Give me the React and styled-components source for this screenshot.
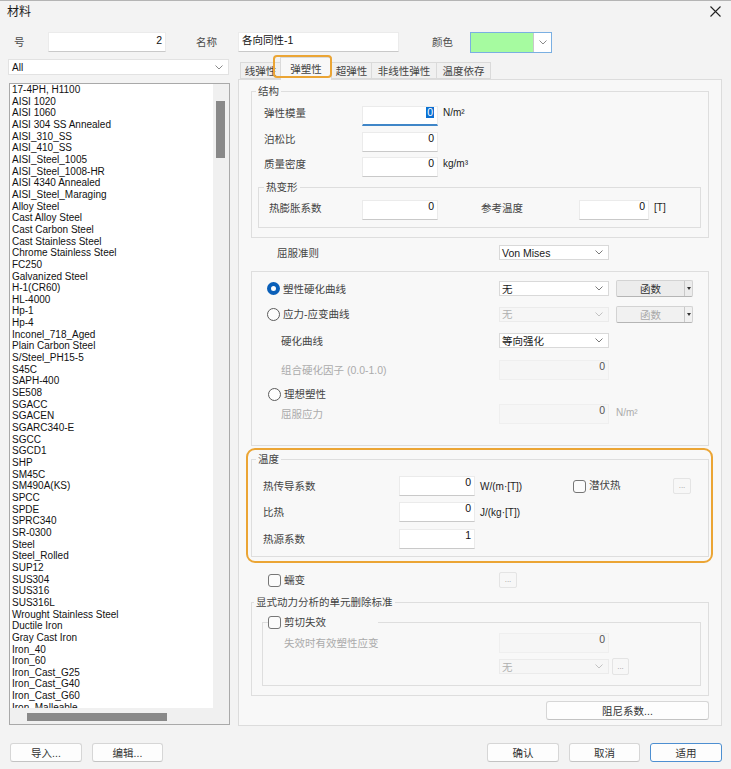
import React from 'react';
import styled, { createGlobalStyle, css } from 'styled-components';

const GlobalStyle = createGlobalStyle`
  html, body { margin: 0; padding: 0; background: #f3f3f3; }
  body { font-family: "Liberation Sans", "Noto Sans CJK SC", sans-serif; }
  *, *::before, *::after { box-sizing: border-box; }
  button { font-family: inherit; }
`;

const materials = [
  '17-4PH, H1100', 'AISI 1020', 'AISI 1060', 'AISI 304 SS Annealed', 'AISI_310_SS', 'AISI_410_SS',
  'AISI_Steel_1005', 'AISI_Steel_1008-HR', 'AISI 4340 Annealed', 'AISI_Steel_Maraging', 'Alloy Steel',
  'Cast Alloy Steel', 'Cast Carbon Steel', 'Cast Stainless Steel', 'Chrome Stainless Steel', 'FC250',
  'Galvanized Steel', 'H-1(CR60)', 'HL-4000', 'Hp-1', 'Hp-4', 'Inconel_718_Aged', 'Plain Carbon Steel',
  'S/Steel_PH15-5', 'S45C', 'SAPH-400', 'SE508', 'SGACC', 'SGACEN', 'SGARC340-E', 'SGCC', 'SGCD1', 'SHP',
  'SM45C', 'SM490A(KS)', 'SPCC', 'SPDE', 'SPRC340', 'SR-0300', 'Steel', 'Steel_Rolled', 'SUP12', 'SUS304',
  'SUS316', 'SUS316L', 'Wrought Stainless Steel', 'Ductile Iron', 'Gray Cast Iron', 'Iron_40', 'Iron_60',
  'Iron_Cast_G25', 'Iron_Cast_G40', 'Iron_Cast_G60', 'Iron_Malleable',
];

// vertical nudge inside a centred flex row
const nudge = (dy = 0) => (dy < 0 ? `margin-bottom: ${-2 * dy}px;` : `margin-top: ${2 * dy}px;`);

const Window = styled.div`
  width: 731px;
  height: 769px;
  display: flex;
  flex-direction: column;
  overflow: hidden;
  background: #f3f3f3;
  border-top: 1px solid #b4b4b4;
  color: #444;
`;

const TitleBar = styled.div`
  height: 21px;
  display: flex;
  align-items: flex-start;
  justify-content: space-between;
  padding: 2px 10px 0 7px;
`;

const Title = styled.span`
  font-family: "Noto Sans CJK SC", sans-serif;
  font-size: 12px;
  line-height: 15px;
  color: #1b1b1b;
`;

const Body = styled.div`
  flex: 1;
  display: flex;
  flex-direction: column;
  padding: 10px 9px 0 8px;
`;

const TopRow = styled.div`
  height: 21px;
  display: flex;
  align-items: flex-start;
`;

const TopLabel = styled.span`
  width: ${p => p.$w}px;
  margin-left: ${p => p.$ml}px;
  padding-top: 4px;
  font-size: 10.5px;
  line-height: 12px;
  color: #4a4a4a;
`;

const Field = styled.div`
  flex: none;
  width: ${p => p.$w}px;
  height: ${p => p.$h || 20}px;
  margin-left: ${p => p.$ml || 0}px;
  display: flex;
  justify-content: ${p => (p.$left ? 'flex-start' : 'flex-end')};
  align-items: flex-start;
  padding: ${p => p.$pt || 0}px 3px 0;
  background: ${p => (p.$disabled ? '#f6f6f6' : '#ffffff')};
  border: 1px solid ${p => (p.$disabled ? '#efefef' : '#ebebeb')};
  border-bottom: ${p =>
    p.$focus ? '2px solid #3f86c8' : p.$disabled ? '1px solid #efefef' : '1px solid #c9c9c9'};
  font-size: 10.5px;
  line-height: 11px;
  color: ${p => (p.$disabled ? '#555' : '#111')};
  white-space: nowrap;
`;

const Selected = styled.span`
  background: #0a6fd1;
  color: #fff;
  padding: 0 1px;
`;

const ColorPicker = styled.div`
  display: flex;
  width: 82px;
  height: 21px;
  border: 1px solid #7aafe2;
  background: #fff;
`;

const Swatch = styled.div`
  flex: 1;
  background: #a6fba0;
  border-right: 1px solid #c8c8c8;
`;

const PickerArrow = styled.div`
  width: 17px;
  display: flex;
  align-items: center;
  justify-content: center;
`;

const Main = styled.div`
  display: grid;
  grid-template-columns: 222px 484px;
  column-gap: 8px;
  height: 671px;
  margin-top: 3px;
`;

const LeftCol = styled.div`
  display: flex;
  flex-direction: column;
`;

const FilterSelect = styled.div`
  width: 221px;
  height: 16px;
  margin-top: 3px;
  display: flex;
  align-items: center;
  justify-content: space-between;
  padding: 0 5px 0 3px;
  background: #fff;
  border: 1px solid #e2e2e2;
  font-size: 10px;
  color: #111;
`;

const ListBox = styled.div`
  width: 221px;
  height: 642px;
  margin: 8px 0 0 1px;
  display: grid;
  grid-template-columns: 1fr 16px;
  grid-template-rows: 1fr 16px;
  border: 1px solid #a9a9a9;
  background: #fff;
`;

const ListItems = styled.div`
  overflow: hidden;
  padding-left: 2px;
`;

const Item = styled.div`
  height: 11.67px;
  line-height: 11.67px;
  font-size: 10px;
  color: #111;
  white-space: nowrap;
`;

const Track = styled.div`
  background: #f0f0f0;
  padding: ${p => p.$pad};
`;

const Thumb = styled.div`
  width: ${p => p.$w}px;
  height: ${p => p.$h}px;
  background: #898989;
`;

const RightCol = styled.div`
  display: flex;
  flex-direction: column;
`;

const TabStrip = styled.div`
  height: 23px;
  display: flex;
  align-items: flex-end;
  padding-left: 2px;
`;

const Tab = styled.div`
  position: relative;
  width: ${p => p.$w}px;
  height: ${p => (p.$active ? 23 : 17)}px;
  margin-right: -1px;
  margin-bottom: ${p => (p.$active ? -1 : 0)}px;
  z-index: ${p => (p.$active ? 2 : 1)};
  display: flex;
  align-items: center;
  justify-content: center;
  padding-bottom: ${p => (p.$active ? 2 : 0)}px;
  background: ${p => (p.$active ? '#f8f8f8' : '#f0f0f0')};
  border: 1px solid #dadada;
  border-bottom: ${p => (p.$active ? 'none' : '1px solid #dadada')};
  font-size: 10.5px;
  color: #444;
  white-space: nowrap;
  ${p => p.$active && css`
    &::after {
      content: '';
      position: absolute;
      left: -8px;
      right: -1px;
      top: -3px;
      bottom: 2px;
      border: 2px solid #eba535;
      border-radius: 4px;
    }
  `}
`;

const Panel = styled.div`
  height: 647px;
  display: flex;
  flex-direction: column;
  padding: 0 12px;
  background: #f8f8f8;
  border: 1px solid #dcdcdc;
`;

const Group = styled.fieldset`
  min-width: 0;
  margin: ${p => p.$mt || 0}px 0 0;
  padding: ${p => p.$pad};
  border: 1px solid #dedede;
`;

// legend offsets are measured from the fieldset's padding edge
const Legend = styled.legend`
  margin-left: ${p => p.$ml}px;
  padding: 0 2px;
  font-size: 10.5px;
  line-height: 12px;
  color: #444;
`;

const CheckLegend = styled.legend`
  width: 110px;
  height: 14px;
  margin-left: ${p => p.$ml}px;
  padding: 0;
  display: flex;
  align-items: center;
  gap: 3px;
`;

const Box = styled.div`
  margin-top: ${p => p.$mt}px;
  padding: ${p => p.$pad};
  border: 1px solid #dedede;
`;

const Highlight = styled.div`
  margin: 2px -4px 0 -5px;
  padding: 3px 2px 4px 3px;
  border: 2px solid #eba535;
  border-radius: 9px;
`;

const Row = styled.div`
  display: flex;
  align-items: center;
  height: ${p => p.$h || 20}px;
  margin-top: ${p => p.$mt || 0}px;
  padding-left: ${p => p.$pl || 0}px;
`;

const Label = styled.span`
  flex: none;
  width: ${p => (p.$w ? `${p.$w}px` : 'auto')};
  margin-left: ${p => p.$ml || 0}px;
  ${p => nudge(p.$dy)}
  font-size: 10.5px;
  line-height: 12px;
  color: ${p => (p.$muted ? '#ababab' : '#444')};
  white-space: nowrap;
`;

const Unit = styled.span`
  flex: none;
  width: ${p => (p.$w ? `${p.$w}px` : 'auto')};
  margin-left: ${p => p.$ml || 5}px;
  ${p => nudge(p.$dy)}
  font-size: 10px;
  line-height: 12px;
  color: ${p => (p.$muted ? '#ababab' : '#222')};
  white-space: nowrap;
`;

const Choice = styled.div`
  flex: none;
  width: ${p => (p.$w ? `${p.$w}px` : 'auto')};
  display: flex;
  align-items: center;
  gap: 3px;
`;

const Radio = styled.span`
  flex: none;
  width: 13px;
  height: 13px;
  border-radius: 50%;
  background: #fdfdfd;
  border: ${p => (p.$checked ? '4px solid #0a5fb8' : '1px solid #5c5c5c')};
`;

const Check = styled.span`
  flex: none;
  width: 13px;
  height: 13px;
  border-radius: 3px;
  background: #fbfbfb;
  border: 1px solid #767676;
`;

const SelectBox = styled.div`
  flex: none;
  width: ${p => p.$w}px;
  height: 15px;
  display: flex;
  align-items: center;
  justify-content: space-between;
  padding: 0 5px 0 2px;
  background: ${p => (p.$disabled ? '#f6f6f6' : '#fff')};
  border: 1px solid ${p => (p.$disabled ? '#ebebeb' : '#d9d9d9')};
  font-size: 10.5px;
  line-height: 12px;
  color: ${p => (p.$disabled ? '#b0b0b0' : '#1a1a1a')};
  white-space: nowrap;
`;

const FuncBtn = styled.div`
  flex: none;
  width: 77px;
  height: 17px;
  margin-left: 7px;
  display: flex;
  background: ${p => (p.$disabled ? '#f1f1f1' : '#ececec')};
  border: 1px solid #d3d3d3;
  border-bottom-color: #b5b5b5;
  border-radius: 2px;
  font-size: 10.5px;
  color: ${p => (p.$disabled ? '#a9a9a9' : '#333')};
`;

const FuncMain = styled.span`
  flex: 1;
  display: flex;
  align-items: center;
  justify-content: center;
  border-right: 1px solid #c9c9c9;
`;

const FuncArrow = styled.span`
  width: 7px;
  display: flex;
  align-items: center;
  justify-content: center;
`;

const Dots = styled.button`
  flex: none;
  width: ${p => p.$w || 18}px;
  height: ${p => p.$h || 16}px;
  margin-left: ${p => p.$ml || 0}px;
  padding: 0 0 3px;
  display: flex;
  align-items: flex-end;
  justify-content: center;
  background: #f7f7f7;
  border: 1px solid #e4e4e4;
  border-radius: 2px;
  font-size: 8px;
  line-height: 8px;
  color: #9a9a9a;
`;

const Btn = styled.button`
  flex: none;
  width: ${p => p.$w}px;
  height: 19px;
  margin-top: ${p => p.$mt || 0}px;
  align-self: ${p => p.$self || 'auto'};
  padding: 0;
  background: #fdfdfd;
  border: 1px solid ${p => (p.$primary ? '#4d8fd1' : '#d6d6d6')};
  border-bottom-color: ${p => (p.$primary ? '#4d8fd1' : '#c3c3c3')};
  border-radius: 3px;
  font-size: 10.5px;
  color: #333;
`;

const Footer = styled.div`
  margin-top: 16px;
  display: flex;
  justify-content: space-between;
`;

const BtnGroup = styled.div`
  display: flex;
  gap: 10px;
  margin-left: ${p => p.$ml || 0}px;
`;

const Chevron = ({ color = '#7a7a7a' }) => (
  <svg width="8" height="5" viewBox="0 0 8 5">
    <path d="M0.5 0.5 L4 4 L7.5 0.5" fill="none" stroke={color} strokeWidth="1" />
  </svg>
);

const Select = ({ w = 110, value, disabled }) => (
  <SelectBox $w={w} $disabled={disabled}>
    <span>{value}</span>
    <Chevron color={disabled ? '#c2c2c2' : '#7a7a7a'} />
  </SelectBox>
);

const FunctionButton = ({ disabled }) => (
  <FuncBtn $disabled={disabled}>
    <FuncMain>函数</FuncMain>
    <FuncArrow>
      <svg width="4" height="3" viewBox="0 0 4 3">
        <path d="M0 0 H4 L2 3 Z" fill="#333" />
      </svg>
    </FuncArrow>
  </FuncBtn>
);

export default function App() {
  return (
    <>
      <GlobalStyle />
      <Window>
        <TitleBar>
          <Title>材料</Title>
          <svg width="11" height="11" viewBox="0 0 11 11" style={{ marginTop: 3 }}>
            <path d="M0.5 0.5 L10.5 10.5 M10.5 0.5 L0.5 10.5" stroke="#222" strokeWidth="1.1" />
          </svg>
        </TitleBar>

        <Body>
          <TopRow>
            <TopLabel $w={34} $ml={6}>号</TopLabel>
            <Field $w={118} $h={20} $pt={2}>2</Field>
            <TopLabel $w={42} $ml={30}>名称</TopLabel>
            <Field $w={161} $h={20} $pt={2} $left>各向同性-1</Field>
            <TopLabel $w={38} $ml={33}>颜色</TopLabel>
            <ColorPicker>
              <Swatch />
              <PickerArrow><Chevron color="#8a8a8a" /></PickerArrow>
            </ColorPicker>
          </TopRow>

          <Main>
            <LeftCol>
              <FilterSelect>
                <span>All</span>
                <Chevron color="#8a8a8a" />
              </FilterSelect>
              <ListBox>
                <ListItems>
                  {materials.map(m => <Item key={m}>{m}</Item>)}
                </ListItems>
                <Track $pad="17px 0 0 3px"><Thumb $w={9} $h={57} /></Track>
                <Track $pad="5px 0 0 17px"><Thumb $w={140} $h={8} /></Track>
                <Track />
              </ListBox>
            </LeftCol>

            <RightCol>
              <TabStrip>
                <Tab $w={41}>线弹性</Tab>
                <Tab $w={52} $active>弹塑性</Tab>
                <Tab $w={41}>超弹性</Tab>
                <Tab $w={66}>非线性弹性</Tab>
                <Tab $w={55}>温度依存</Tab>
              </TabStrip>

              <Panel>
                <Group $mt={5} $pad="9px 7px 9px 6px">
                  <Legend $ml={-2}>结构</Legend>
                  <Row $pl={6}>
                    <Label $w={98} $dy={-3}>弹性模量</Label>
                    <Field $w={76} $focus><Selected>0</Selected></Field>
                    <Unit $dy={-3}>N/m²</Unit>
                  </Row>
                  <Row $pl={6} $mt={5.5}>
                    <Label $w={98} $dy={-3}>泊松比</Label>
                    <Field $w={76}>0</Field>
                  </Row>
                  <Row $pl={6} $mt={5.5}>
                    <Label $w={98} $dy={-3}>质量密度</Label>
                    <Field $w={76}>0</Field>
                    <Unit $dy={-3}>kg/m³</Unit>
                  </Row>
                  <Group $mt={4} $pad="7px 10px">
                    <Legend $ml={-5}>热变形</Legend>
                    <Row>
                      <Label $w={93} $dy={-2}>热膨胀系数</Label>
                      <Field $w={76}>0</Field>
                      <Label $w={98} $ml={43} $dy={-2}>参考温度</Label>
                      <Field $w={70}>0</Field>
                      <Unit $dy={-2}>[T]</Unit>
                    </Row>
                  </Group>
                </Group>

                <Row $h={15} $mt={7} $pl={26}>
                  <Label $w={222}>屈服准则</Label>
                  <Select value="Von Mises" />
                </Row>

                <Box $mt={11} $pad="8px 0 21px 15px">
                  <Row $h={17}>
                    <Choice $w={232}><Radio $checked /><Label>塑性硬化曲线</Label></Choice>
                    <Select value="无" />
                    <FunctionButton />
                  </Row>
                  <Row $h={18} $mt={8}>
                    <Choice $w={232}><Radio /><Label>应力-应变曲线</Label></Choice>
                    <Select value="无" disabled />
                    <FunctionButton disabled />
                  </Row>
                  <Row $h={15} $mt={10} $pl={14}>
                    <Label $w={218}>硬化曲线</Label>
                    <Select value="等向强化" />
                  </Row>
                  <Row $mt={12} $pl={14}>
                    <Label $w={218} $muted>组合硬化因子 (0.0-1.0)</Label>
                    <Field $w={110} $disabled>0</Field>
                  </Row>
                  <Row $h={14} $mt={7} $pl={1}>
                    <Choice><Radio /><Label>理想塑性</Label></Choice>
                  </Row>
                  <Row $mt={3} $pl={14}>
                    <Label $w={218} $muted>屈服应力</Label>
                    <Field $w={110} $disabled>0</Field>
                    <Unit $muted $ml={7} $dy={-1}>N/m²</Unit>
                  </Row>
                </Box>

                <Highlight>
                  <Group $pad="11px 0 7px 11px">
                    <Legend $ml={-7}>温度</Legend>
                    <Row>
                      <Label $w={136}>热传导系数</Label>
                      <Field $w={76}>0</Field>
                      <Unit $w={93} $dy={1}>W/(m·[T])</Unit>
                      <Choice $w={100}><Check /><Label $dy={-1}>潜伏热</Label></Choice>
                      <Dots>...</Dots>
                    </Row>
                    <Row $mt={6}>
                      <Label $w={136}>比热</Label>
                      <Field $w={76}>0</Field>
                      <Unit $dy={1}>J/(kg·[T])</Unit>
                    </Row>
                    <Row $mt={7}>
                      <Label $w={136}>热源系数</Label>
                      <Field $w={76}>1</Field>
                    </Row>
                  </Group>
                </Highlight>

                <Row $h={16} $mt={9} $pl={17}>
                  <Choice $w={231}><Check /><Label>蠕变</Label></Choice>
                  <Dots>...</Dots>
                </Row>

                <Group $mt={8} $pad="7px 7px 9px 10px">
                  <Legend $ml={-8}>显式动力分析的单元删除标准</Legend>
                  <Group $pad="4px 0 10px 21px">
                    <CheckLegend $ml={-16}><Check /><Label>剪切失效</Label></CheckLegend>
                    <Row>
                      <Label $w={215} $muted>失效时有效塑性应变</Label>
                      <Field $w={110} $disabled>0</Field>
                    </Row>
                    <Row $h={17} $mt={5} $pl={215}>
                      <Select value="无" disabled />
                      <Dots $w={17} $h={17} $ml={3}>...</Dots>
                    </Row>
                  </Group>
                </Group>

                <Btn $w={163} $mt={5} $self="flex-end">阻尼系数...</Btn>
              </Panel>
            </RightCol>
          </Main>

          <Footer>
            <BtnGroup $ml={2}>
              <Btn $w={72}>导入...</Btn>
              <Btn $w={71}>编辑...</Btn>
            </BtnGroup>
            <BtnGroup>
              <Btn $w={72}>确认</Btn>
              <Btn $w={71}>取消</Btn>
              <Btn $w={72} $primary>适用</Btn>
            </BtnGroup>
          </Footer>
        </Body>
      </Window>
    </>
  );
}
